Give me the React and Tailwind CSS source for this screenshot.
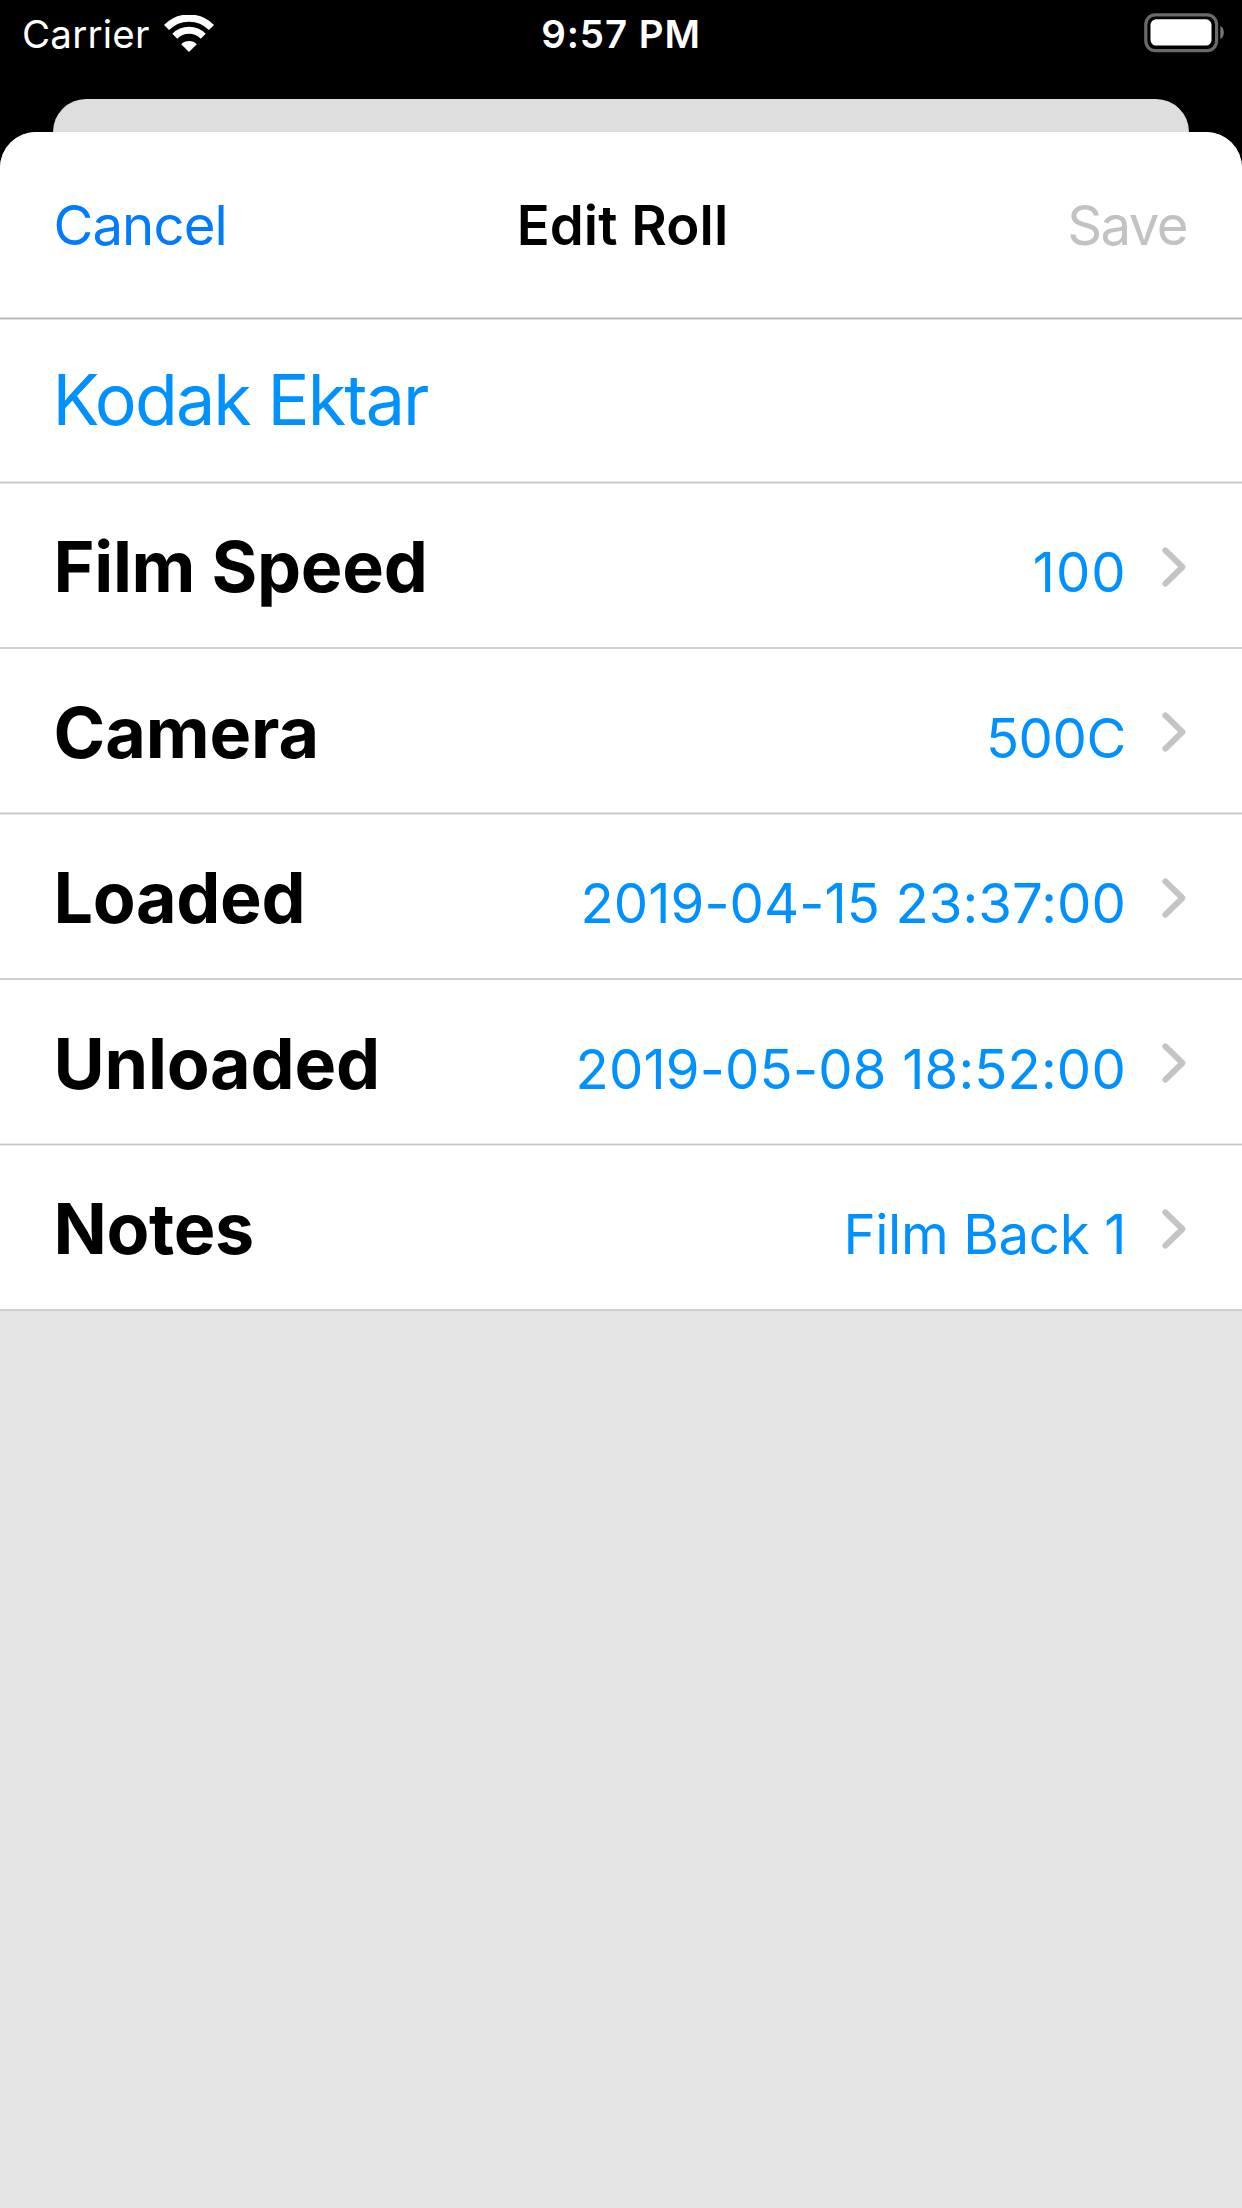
import React from 'react';

const rows = [
  { label: 'Film Speed', value: '100', labelClass: 'tracking-[-0.3px]', valueClass: 'tracking-[0.9px] mr-[-0.5px]', soft: false },
  { label: 'Camera', value: '500C', labelClass: 'tracking-[-0.1px]', valueClass: 'tracking-[-0.4px]', soft: true },
  { label: 'Loaded', value: '2019-04-15 23:37:00', labelClass: 'tracking-[-0.35px]', valueClass: 'tracking-[0.1px]', soft: false },
  { label: 'Unloaded', value: '2019-05-08 18:52:00', labelClass: 'tracking-[-0.2px]', valueClass: 'tracking-[0.18px]', soft: true },
  { label: 'Notes', value: 'Film Back 1', labelClass: 'tracking-[-0.35px]', valueClass: 'tracking-[-0.35px]', soft: false },
];

const WifiIcon = () => (
  <svg className="w-[50px] h-[38px]" viewBox="0 0 50 38" fill="none">
    <path d="M2.5 12.5 A31.5 31.5 0 0 1 47.5 12.5" stroke="#fff" strokeWidth="7.2" />
    <path d="M10.8 21.2 A20 20 0 0 1 39.2 21.2" stroke="#fff" strokeWidth="7" />
    <path d="M25 37 L17.2 29.2 A11 11 0 0 1 32.8 29.2 Z" fill="#fff" />
  </svg>
);

const BatteryIcon = () => (
  <svg className="w-[82px] h-[40px]" viewBox="0 0 82 40">
    <rect x="1.8" y="1.8" width="70.8" height="35.8" rx="9.5" fill="none" stroke="#6a6a6a" strokeWidth="3.2" />
    <rect x="6.5" y="6.3" width="61" height="26.3" rx="5.5" fill="#fff" />
    <path d="M76.3 13 C81 15 81 24 76.3 26 Z" fill="#777" />
  </svg>
);

const Chevron = () => (
  <svg className="w-6 h-10" viewBox="0 0 24 40" fill="none">
    <path d="M3.4 3.4 L20.4 20 L3.4 36.6" stroke="#c4c4c6" strokeWidth="6" strokeLinecap="round" strokeLinejoin="round" />
  </svg>
);

// soft lines are three pixels with a darker core
const Divider = ({ soft }) =>
  soft ? (
    <div className="h-[3px] border-y border-[#e8e8e8] bg-[#c6c6c6]" />
  ) : (
    <div className="h-[2px] bg-[#cfcfcf]" />
  );

const Row = ({ label, value, labelClass, valueClass, soft }) => (
  <div className="h-[163px] flex items-center pl-[53.5px] pr-[56px]">
    <div className={`flex-1 flex items-baseline justify-between ${soft ? 'pt-[4px]' : 'pt-[2px]'}`}>
      <span className={`text-[70px] leading-[86px] font-bold text-black ${labelClass}`}>{label}</span>
      <span className={`text-[54.5px] leading-[66px] text-[#0091ff] ${valueClass}`}>{value}</span>
    </div>
    <div className="ml-[36px] pt-[2px]">
      <Chevron />
    </div>
  </div>
);

const App = () => {
  return (
    <div className="w-[1242px] h-[2208px] bg-black flex flex-col overflow-hidden whitespace-nowrap font-['Inter',sans-serif]">
      {/* Status bar */}
      <div className="h-[99px] grid grid-cols-3 items-start px-[22px] text-white">
        <div className="flex pt-[11px]">
          <span className="text-[38.5px] leading-[46px] tracking-[0.2px]">Carrier</span>
          <div className="ml-[14px] pt-[4px]">
            <WifiIcon />
          </div>
        </div>
        <div className="text-center pt-[11px] text-[38.5px] leading-[46px] font-semibold tracking-[0.9px]">9:57 PM</div>
        <div className="flex justify-end pt-[13px] mr-[-6px]">
          <BatteryIcon />
        </div>
      </div>

      {/* Edge of the sheet behind */}
      <div className="h-[33px] mx-[53px] rounded-t-[33px] bg-[#dedede]" />

      {/* Sheet */}
      <div className="flex-1 rounded-t-[36px] overflow-hidden bg-[#e5e5e5]">
        <div className="bg-white">
          <div className="h-[185px] grid grid-cols-3 items-center px-[53.5px] text-[54.5px] leading-[66px]">
            <span className="text-[#007aff] tracking-[-0.9px]">Cancel</span>
            <span className="text-center font-semibold text-black tracking-[0.1px] pl-[3px]">Edit Roll</span>
            <span className="text-right text-[#c2c2c2] tracking-[-1.6px] pr-[1.6px]">Save</span>
          </div>
          <div className="h-[3px] border-y border-[#e0e0e0] bg-[#b2b2b2]" />
          <div className="h-[161px] flex items-center pl-[52.5px] pb-[2px]">
            <span className="text-[70px] leading-[86px] text-[#0091ff] tracking-[-1.9px]">Kodak Ektar</span>
          </div>
          <Divider soft />
          {rows.map((row) => (
            <React.Fragment key={row.label}>
              <Row {...row} />
              <Divider soft={row.soft} />
            </React.Fragment>
          ))}
        </div>
      </div>
    </div>
  );
};

export default App;
